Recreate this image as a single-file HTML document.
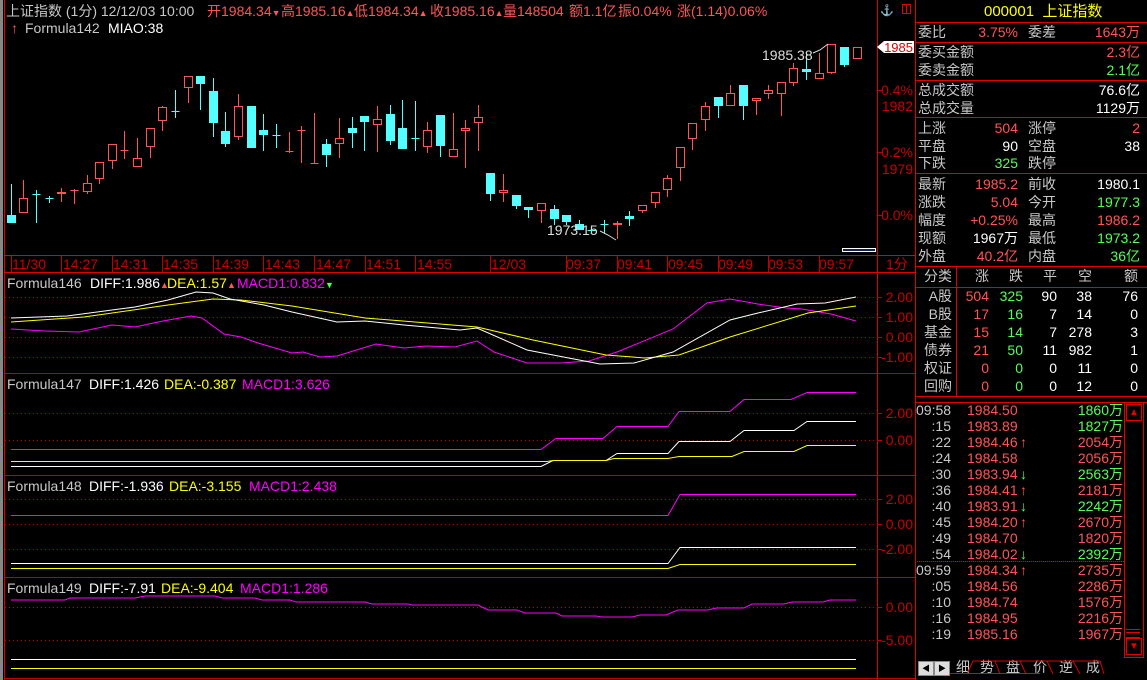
<!DOCTYPE html>
<html><head><meta charset="utf-8">
<style>
body{margin:0;background:#000;width:1147px;height:680px;overflow:hidden;position:relative;font-family:"Liberation Sans","WenQuanYi Zen Hei","Noto Sans CJK SC",sans-serif;}
svg{position:absolute;left:0;top:0}
.t{position:absolute;font-size:14px;white-space:nowrap;line-height:15px}
.g{color:#c8c8c8}.r{color:#ff5555}.gr{color:#55ff55}.w{color:#fff}.y{color:#ffff00}.m{color:#ff00ff}
.rt{text-align:right}
</style></head><body>
<svg width="1147" height="680" id="s" font-family="Liberation Sans, WenQuanYi Zen Hei, sans-serif" font-size="13">
<rect x="0" y="0" width="3" height="680" fill="#888"/>
<line x1="4.5" y1="0" x2="4.5" y2="680" stroke="#e00000"/>
<line x1="877.5" y1="0" x2="877.5" y2="680" stroke="#e00000"/>
<line x1="915.5" y1="0" x2="915.5" y2="680" stroke="#e00000"/>
<line x1="4" y1="255.5" x2="915" y2="255.5" stroke="#e00000"/>
<line x1="4" y1="272.5" x2="915" y2="272.5" stroke="#e00000"/>
<line x1="4" y1="373.5" x2="915" y2="373.5" stroke="#c00000"/>
<line x1="4" y1="475.5" x2="915" y2="475.5" stroke="#c00000"/>
<line x1="4" y1="577.5" x2="915" y2="577.5" stroke="#c00000"/>
<line x1="4" y1="678.5" x2="915" y2="678.5" stroke="#c00000"/>
<g stroke="#c00000" stroke-dasharray="1,3">
<line x1="5" y1="297.5" x2="877" y2="297.5"/><line x1="5" y1="317.5" x2="877" y2="317.5"/><line x1="5" y1="337.5" x2="877" y2="337.5"/><line x1="5" y1="357.5" x2="877" y2="357.5"/>
<line x1="5" y1="413.5" x2="877" y2="413.5"/><line x1="5" y1="440.5" x2="877" y2="440.5"/>
<line x1="5" y1="499.5" x2="877" y2="499.5"/><line x1="5" y1="524.5" x2="877" y2="524.5"/><line x1="5" y1="549.5" x2="877" y2="549.5"/>
<line x1="5" y1="607.5" x2="877" y2="607.5"/><line x1="5" y1="640.5" x2="877" y2="640.5"/>
</g>
<g id="cd"></g>
<g fill="#c80000" font-size="14">
<text x="12" y="269">11/30</text><text x="63" y="269">14:27</text><text x="113" y="269">14:31</text><text x="163" y="269">14:35</text><text x="214" y="269">14:39</text><text x="265" y="269">14:43</text><text x="316" y="269">14:47</text><text x="366" y="269">14:51</text><text x="417" y="269">14:55</text><text x="491" y="269">12/03</text><text x="566" y="269">09:37</text><text x="617" y="269">09:41</text><text x="668" y="269">09:45</text><text x="718" y="269">09:49</text><text x="768" y="269">09:53</text><text x="819" y="269">09:57</text><text x="886" y="269">1分</text>
</g>
<g stroke="#c00000"><line x1="11.5" y1="256" x2="11.5" y2="272"/><line x1="61.5" y1="256" x2="61.5" y2="272"/><line x1="112.5" y1="256" x2="112.5" y2="272"/><line x1="162.5" y1="256" x2="162.5" y2="272"/><line x1="213.5" y1="256" x2="213.5" y2="272"/><line x1="263.5" y1="256" x2="263.5" y2="272"/><line x1="314.5" y1="256" x2="314.5" y2="272"/><line x1="365.5" y1="256" x2="365.5" y2="272"/><line x1="415.5" y1="256" x2="415.5" y2="272"/><line x1="490.5" y1="256" x2="490.5" y2="272"/><line x1="566.5" y1="256" x2="566.5" y2="272"/><line x1="617.5" y1="256" x2="617.5" y2="272"/><line x1="667.5" y1="256" x2="667.5" y2="272"/><line x1="718.5" y1="256" x2="718.5" y2="272"/><line x1="768.5" y1="256" x2="768.5" y2="272"/><line x1="819.5" y1="256" x2="819.5" y2="272"/></g>
<rect x="842.5" y="248.5" width="33" height="3" fill="#102050" stroke="#fff"/>
<g fill="#c80000" font-size="14" text-anchor="end">
<text x="913" y="95">0.4%</text><text x="913" y="111">1982</text>
<text x="913" y="157">0.2%</text><text x="913" y="174">1979</text>
<text x="913" y="220">0.0%</text>
</g>
<g stroke="#c00000"><line x1="877" y1="90.5" x2="882" y2="90.5"/><line x1="877" y1="152.5" x2="882" y2="152.5"/><line x1="877" y1="215.5" x2="882" y2="215.5"/><line x1="877" y1="297.5" x2="882" y2="297.5"/><line x1="877" y1="317.5" x2="882" y2="317.5"/><line x1="877" y1="337.5" x2="882" y2="337.5"/><line x1="877" y1="357.5" x2="882" y2="357.5"/><line x1="877" y1="413.5" x2="882" y2="413.5"/><line x1="877" y1="440.5" x2="882" y2="440.5"/><line x1="877" y1="499.5" x2="882" y2="499.5"/><line x1="877" y1="524.5" x2="882" y2="524.5"/><line x1="877" y1="549.5" x2="882" y2="549.5"/><line x1="877" y1="607.5" x2="882" y2="607.5"/><line x1="877" y1="640.5" x2="882" y2="640.5"/></g>
<polygon points="877,47 884,41 914,41 914,53 884,53" fill="#fff"/>
<text x="913" y="52" fill="#e00000" text-anchor="end">1985</text>
<text x="880" y="14" fill="#e00000" font-size="11">⚓</text>
<rect x="902.5" y="4.5" width="8" height="9" fill="none" stroke="#e00000"/><line x1="906.5" y1="4" x2="906.5" y2="13" stroke="#e00000"/>
<g fill="#c80000" font-size="14" text-anchor="end">
<text x="913" y="302">2.00</text><text x="913" y="322">1.00</text><text x="913" y="342">0.00</text><text x="913" y="362">-1.00</text>
<text x="913" y="418">2.00</text><text x="913" y="445">0.00</text>
<text x="913" y="504">2.00</text><text x="913" y="529">0.00</text><text x="913" y="554">-2.00</text>
<text x="913" y="612">0.00</text><text x="913" y="645">-5.00</text>
</g>
<text x="762" y="60" fill="#ddd" font-size="14">1985.38</text><polyline points="813,53 820,50 828,44" fill="none" stroke="#ddd"/>
<text x="547" y="235" fill="#ddd" font-size="14">1973.15</text><polyline points="600,231 608,235 616,240" fill="none" stroke="#ddd"/>
<polyline fill="none" stroke="#ff00ff" points="11,329 45,331 79,332 112,325 135,327 163,321 191,316 202,318 224,334 241,337 258,343 292,353 303,352 320,357 337,356 376,344 404,348 426,346 455,347 477,341 494,352 527,363 561,363 589,361 617,352 673,329 707,303 730,299 758,304 786,308 802,309 831,314 856,321"/>
<polyline fill="none" stroke="#ffff00" points="11,322 84,317 168,305 213,299 241,300 292,306 365,318 477,327 533,340 606,355 645,358 679,355 730,337 808,313 856,306"/>
<polyline fill="none" stroke="#fff" points="11,318 67,316 135,307 168,300 196,292 213,293 230,299 264,305 292,312 337,322 365,321 404,325 460,330 477,328 527,350 600,364 634,363 673,352 730,320 758,313 797,304 825,303 856,297"/>
<polyline fill="none" stroke="#ff00ff" points="11,449.5 541,449.5 556,438.5 603,438.5 617,426.5 668,426.5 679,411.5 730,411.5 744,399.5 791,399.5 807,392.5 856,392.5"/>
<polyline fill="none" stroke="#fff" points="11,466.5 541,466.5 553,460.5 606,460.5 617,453.5 668,453.5 679,441.5 730,441.5 744,430.5 794,430.5 807,421.5 856,421.5"/>
<polyline fill="none" stroke="#ffff00" points="11,461.5 547,461.5 553,460.5 606,460.5 614,458.5 668,458.5 679,456.5 732,456.5 744,451.5 794,451.5 807,445.5 856,445.5"/>
<polyline fill="none" stroke="#ff00ff" points="11,515.5 668,515.5 680,494.5 856,494.5"/>
<polyline fill="none" stroke="#fff" points="11,563.5 668,563.5 680,547.5 856,547.5"/>
<polyline fill="none" stroke="#ffff00" points="11,568.5 668,568.5 680,564.5 856,564.5"/>
<polyline fill="none" stroke="#ff00ff" points="11,600 65,600 70,598 135,598 145,596 215,596 222,598 255,598 262,600 290,600 296,602 365,602 372,604 408,604 412,605 478,605 488,610 517,610 525,613 556,613 562,616 596,616 602,617 632,617 640,615 666,615 678,610 708,610 716,608 744,608 752,604 784,604 792,602 823,602 830,600 856,600"/>
<line x1="11" y1="659.5" x2="856" y2="659.5" stroke="#fff"/>
<line x1="11" y1="668.5" x2="856" y2="668.5" stroke="#ffff00"/>
</svg>

<div class="t g" style="left:6px;top:4px">上证指数 (1分) 12/12/03 10:00</div>
<div class="t r" style="left:207px;top:4px">开1984.34<span style="font-size:9px">▼</span></div>
<div class="t r" style="left:281px;top:4px">高1985.16<span style="font-size:9px">▲</span></div>
<div class="t r" style="left:354px;top:4px">低1984.34<span style="font-size:9px">▲</span></div>
<div class="t r" style="left:430px;top:4px">收1985.16<span style="font-size:9px">▲</span></div>
<div class="t r" style="left:503px;top:4px">量148504</div>
<div class="t r" style="left:569px;top:4px">额1.1亿</div>
<div class="t r" style="left:618px;top:4px">振0.04%</div>
<div class="t r" style="left:677px;top:4px">涨(1.14)0.06%</div>
<div class="t r" style="left:11px;top:21px">↑</div>
<div class="t g" style="left:25px;top:21px">Formula142</div>
<div class="t w" style="left:108px;top:21px">MIAO:38</div>

<div class="t g" style="left:7px;top:276px">Formula146</div><div class="t w" style="left:90px;top:276px">DIFF:1.986<span class="r" style="font-size:9px">▲</span></div><div class="t y" style="left:167px;top:276px">DEA:1.57<span class="r" style="font-size:9px">▲</span></div><div class="t m" style="left:237px;top:276px">MACD1:0.832<span class="gr" style="font-size:9px">▼</span></div>
<div class="t g" style="left:7px;top:377px">Formula147</div><div class="t w" style="left:89px;top:377px">DIFF:1.426</div><div class="t y" style="left:164px;top:377px">DEA:-0.387</div><div class="t m" style="left:242px;top:377px">MACD1:3.626</div>
<div class="t g" style="left:7px;top:479px">Formula148</div><div class="t w" style="left:89px;top:479px">DIFF:-1.936</div><div class="t y" style="left:169px;top:479px">DEA:-3.155</div><div class="t m" style="left:249px;top:479px">MACD1:2.438</div>
<div class="t g" style="left:7px;top:581px">Formula149</div><div class="t w" style="left:89px;top:581px">DIFF:-7.91</div><div class="t y" style="left:161px;top:581px">DEA:-9.404</div><div class="t m" style="left:240px;top:581px">MACD1:1.286</div>

<div style="position:absolute;left:916px;top:0;width:231px;height:680px;font-size:13px">
<div style="position:absolute;left:0;top:22px;width:231px;height:1px;background:#e00000"></div>
<div style="position:absolute;left:0;top:42px;width:231px;height:1px;background:#e00000"></div>
<div style="position:absolute;left:0;top:80px;width:231px;height:1px;background:#e00000"></div>
<div style="position:absolute;left:0;top:117px;width:231px;height:1px;background:#e00000"></div>
<div style="position:absolute;left:0;top:173px;width:231px;height:1px;background:#e00000"></div>
<div style="position:absolute;left:0;top:266px;width:231px;height:1px;background:#e00000"></div>
<div style="position:absolute;left:0;top:287px;width:231px;height:1px;background:#e00000"></div>
<div style="position:absolute;left:40px;top:266px;width:1px;height:130px;background:#e00000"></div>
<div style="position:absolute;left:0;top:396px;width:231px;height:1px;background:#e00000"></div>
<div style="position:absolute;left:0;top:402px;width:231px;height:1px;background:#e00000"></div>
</div>
<div class="t y" style="left:984px;top:4px;font-size:15px">000001&nbsp; 上证指数</div>
<div id="rp"></div>

<div id="tk"></div>
<div style="position:absolute;left:915px;top:561px;width:209px;border-top:1px dotted #e00000"></div>
<div style="position:absolute;left:1124px;top:402px;width:18px;height:254px;border:1px solid #e00000"></div>
<div style="position:absolute;left:1126px;top:404px;width:14px;height:15px;border:1px solid #e00000;color:#e00000;font-size:10px;text-align:center;line-height:15px">▲</div>
<div style="position:absolute;left:1126px;top:638px;width:14px;height:15px;border:1px solid #e00000;color:#e00000;font-size:10px;text-align:center;line-height:15px">▼</div>
<div style="position:absolute;left:1126px;top:629px;width:14px;height:7px;border-top:1px solid #e00000;border-bottom:1px solid #e00000"></div>
<div style="position:absolute;left:1126px;top:632px;width:14px;height:1px;background:#e00000"></div>
<div style="position:absolute;left:918px;top:661px;width:14px;height:13px;background:#ddd;border:1px solid #888;font-size:8px;text-align:center;line-height:13px">◀</div>
<div style="position:absolute;left:934px;top:661px;width:14px;height:13px;background:#ddd;border:1px solid #888;font-size:8px;text-align:center;line-height:13px">▶</div>
<div style="position:absolute;left:950px;top:673px;width:90px;height:1px;background:#e00000"></div>
<div class="t g" style="left:956px;top:660px">细</div>
<div class="t g" style="left:980px;top:660px">势</div>
<div class="t g" style="left:1006px;top:660px">盘</div>
<div class="t g" style="left:1033px;top:660px">价</div>
<div class="t g" style="left:1059px;top:660px">逆</div>
<div class="t g" style="left:1086px;top:660px">成</div>
<svg width="1147" height="680" style="pointer-events:none"><g stroke="#e00000" fill="none">
<polyline points="967,674 973,661 995,661 1000,674"/><polyline points="995,661 1020,661 1026,674"/><polyline points="1020,661 1047,661 1053,674"/><polyline points="1047,661 1073,661 1080,674"/><polyline points="1073,661 1100,661 1104,674"/>
</g></svg>

<script>
var C=[[34,525,548,432,548,'c'],[70,475,520,420,520,'r'],[109,463,463,450,548,'c'],[148,474,474,467,488,'c'],[184,457,463,445,485,'r'],[223,450,450,448,491,'r'],[262,430,455,405,463,'r'],[298,367,418,367,432,'r'],[337,313,364,313,386,'r'],[373,330,330,273,358,'r'],[412,355,380,294,380,'r'],[451,265,320,265,353,'r'],[487,202,244,198,272,'r'],[526,214,214,150,233,'c'],[565,109,143,109,188,'r'],[601,109,131,109,209,'c'],[640,153,248,114,290,'c'],[676,273,311,216,320,'c'],[715,199,290,162,299,'r'],[754,199,323,199,323,'c'],[790,271,284,222,332,'c'],[829,285,285,252,323,'c'],[868,334,334,276,338,'r'],[904,270,270,258,368,'r'],[943,370,370,219,370,'r'],[979,313,344,297,380,'c'],[1018,295,313,234,353,'r'],[1057,265,278,231,323,'c'],[1093,229,245,229,332,'c'],[1132,238,256,198,335,'r'],[1171,222,302,195,314,'c'],[1207,265,326,180,326,'c'],[1246,295,295,183,332,'c'],[1282,271,322,246,338,'r'],[1320,225,317,225,350,'c'],[1360,328,350,219,350,'r'],[1396,265,274,240,383,'r'],[1435,232,250,195,332,'r'],[1471,399,461,399,482,'c'],[1510,451,460,402,485,'r'],[1549,466,497,466,506,'c'],[1585,502,509,502,533,'c'],[1624,490,512,490,548,'r'],[1663,508,536,495,555,'c'],[1699,525,545,525,555,'c'],[1738,553,569,540,569,'c'],[1774,570,570,562,578,'c'],[1813,552,552,540,578,'c'],[1852,550,556,544,597,'r'],[1888,528,536,514,557,'c'],[1927,496,512,496,518,'r'],[1966,457,490,457,503,'r'],[2002,414,451,405,470,'r'],[2041,322,385,322,422,'r'],[2077,250,298,250,330,'r'],[2116,199,241,186,272,'r'],[2155,171,197,171,233,'c'],[2191,159,197,135,197,'r'],[2230,135,197,135,240,'c'],[2269,175,184,175,225,'r'],[2305,151,163,135,177,'r'],[2344,127,163,127,228,'r'],[2380,85,130,70,137,'r'],[2419,87,95,40,120,'c'],[2458,100,116,40,116,'r'],[2494,13,98,13,102,'r'],[2533,21,74,21,80,'c'],[2572,21,58,21,58,'r']];
var h='';C.forEach(function(d){var x=Math.round(d[0]/3)+.5,bt=Math.round(40+d[1]/3),bb=Math.round(40+d[2]/3),wt=Math.round(40+d[3]/3),wb=Math.round(40+d[4]/3);var col=d[5]=='c'?'#54ffff':'#ff5555';
h+='<line x1="'+x+'" y1="'+wt+'" x2="'+x+'" y2="'+wb+'" stroke="'+col+'"/>';
if(bb-bt<1){h+='<line x1="'+(x-4)+'" y1="'+(bt+.5)+'" x2="'+(x+4)+'" y2="'+(bt+.5)+'" stroke="'+col+'"/>';}
else if(d[5]=='c'){h+='<rect x="'+(x-4.5)+'" y="'+bt+'" width="9" height="'+(bb-bt)+'" fill="'+col+'"/>';}
else{h+='<rect x="'+(x-4)+'" y="'+(bt+.5)+'" width="8" height="'+(bb-bt-1)+'" fill="#000" stroke="'+col+'"/>';}});
document.getElementById('cd').innerHTML=h;
var R=[[33,'委比','3.75%','r','委差','1643万','r'],[53,'委买金额','','','','2.3亿','r'],[71,'委卖金额','','','','2.1亿','gr'],[91,'总成交额','','','','76.6亿','w'],[109,'总成交量','','','','1129万','w'],[129,'上涨','504','r','涨停','2','r'],[147,'平盘','90','w','空盘','38','w'],[164,'下跌','325','gr','跌停','',''],[185,'最新','1985.2','r','前收','1980.1','w'],[203,'涨跌','5.04','r','今开','1977.3','gr'],[221,'幅度','+0.25%','r','最高','1986.2','r'],[239,'现额','1967万','w','最低','1973.2','gr'],[257,'外盘','40.2亿','r','内盘','36亿','gr']];
var s='';R.forEach(function(r){var t=r[0]-8;s+='<div class="t g" style="left:918px;top:'+t+'px">'+r[1]+'</div>';if(r[2])s+='<div class="t rt '+r[3]+'" style="left:950px;width:68px;top:'+t+'px">'+r[2]+'</div>';if(r[4])s+='<div class="t g" style="left:1028px;top:'+t+'px">'+r[4]+'</div>';if(r[5])s+='<div class="t rt '+r[6]+'" style="left:1060px;width:80px;top:'+t+'px">'+r[5]+'</div>';});
var T=[[277,'分类','涨','跌','平','空','额',1],[297,'A股','504','325','90','38','76'],[315,'B股','17','16','7','14','0'],[333,'基金','15','14','7','278','3'],[351,'债券','21','50','11','982','1'],[369,'权证','0','0','0','11','0'],[387,'回购','0','0','0','12','0']];
var rx=[989,1023,1057,1092,1138];
T.forEach(function(r){var t=r[0]-8;s+='<div class="t g rt" style="left:910px;width:42px;top:'+t+'px">'+r[1]+'</div>';for(var i=0;i<5;i++){var c=r[7]?'g':(i==0?'r':i==1?'gr':'w');s+='<div class="t rt '+c+'" style="left:'+(rx[i]-50)+'px;width:50px;top:'+t+'px">'+r[i+2]+'</div>';}});
document.getElementById('rp').innerHTML=s;
var K=[['09:58','1984.50','','1860万','gr'],[':15','1983.89','','1827万','gr'],[':22','1984.46','↑','2054万','r'],[':24','1984.58','','2056万','r'],[':30','1983.94','↓','2563万','gr'],[':36','1984.41','↑','2181万','r'],[':40','1983.91','↓','2242万','gr'],[':45','1984.20','↑','2670万','r'],[':49','1984.70','','1820万','r'],[':54','1984.02','↓','2392万','gr'],['09:59','1984.34','↑','2735万','r'],[':05','1984.56','','2286万','r'],[':10','1984.74','','1576万','r'],[':16','1984.95','','2216万','r'],[':19','1985.16','','1967万','r']];
var k='';K.forEach(function(r,i){var t=403+i*16;if(r[0].length>3)k+='<div class="t g" style="left:916px;top:'+t+'px">'+r[0]+'</div>';else k+='<div class="t g rt" style="left:920px;width:31px;top:'+t+'px">'+r[0]+'</div>';k+='<div class="t r" style="left:967px;top:'+t+'px">'+r[1]+'</div>';if(r[2])k+='<div class="t '+(r[2]=='↑'?'r':'gr')+'" style="left:1020px;top:'+t+'px">'+r[2]+'</div>';k+='<div class="t rt '+r[4]+'" style="left:1058px;width:65px;top:'+t+'px">'+r[3]+'</div>';});
document.getElementById('tk').innerHTML=k;
</script>
</body></html>
